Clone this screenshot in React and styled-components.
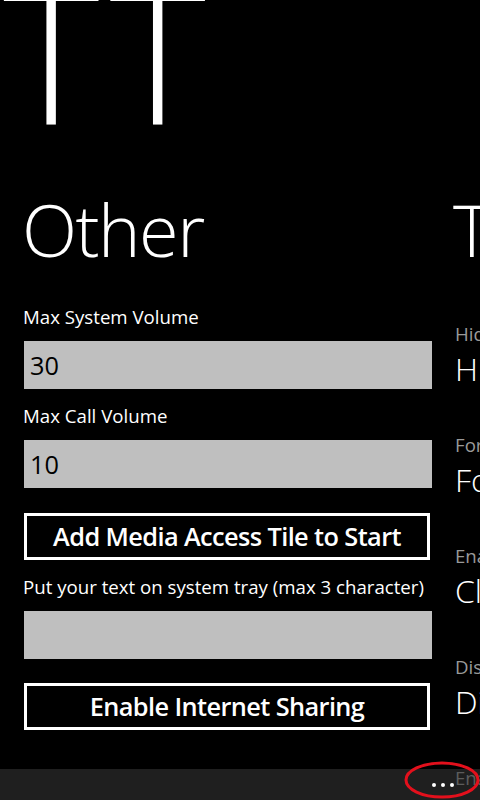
import React from 'react';
import styled, { createGlobalStyle } from 'styled-components';

const GlobalStyle = createGlobalStyle`
html, body {
  margin: 0;
  padding: 0;
  background: #000;
}
body {
  font-family: "Open Sans", "Noto Sans", sans-serif;
  color: #fff;
}
`

const Screen = styled.div`
position: relative;
width: 480px;
height: 800px;
overflow: hidden;
background: #000;
`
const PanoramaTitle = styled.div`
font-size: 184px;
font-weight: 300;
line-height: 184px;
height: 184px;
margin-top: -38px;
padding-left: 3px;
white-space: nowrap;
letter-spacing: 10px;
`
const Sections = styled.div`
display: flex;
gap: 23px;
margin-top: 43px;
padding-left: 24px;
`
const Section = styled.div`
flex: 0 0 ${p => p.$width || 'auto'};
display: flex;
flex-direction: column;
`
const SectionHeader = styled.h1`
margin: 0;
font-size: 72px;
font-weight: 300;
line-height: 80px;
height: 80px;
white-space: nowrap;
margin-left: -2px;
letter-spacing: -1.5px;
`
const FieldLabel = styled.div`
font-size: 18.67px;
line-height: 24px;
margin-top: ${p => p.$top || '0px'};
margin-bottom: 12px;
margin-left: -1px;
white-space: nowrap;
`
const TextBox = styled.div`
height: 48px;
box-sizing: border-box;
background: #bfbfbf;
color: #000;
font-size: 25.33px;
line-height: 48px;
padding-left: 6px;
`
const Button = styled.button`
display: block;
box-sizing: border-box;
width: 406px;
height: 47px;
margin-top: ${p => p.$top || '24px'};
background: transparent;
border: 3px solid #fff;
color: #fff;
font-family: inherit;
font-size: 25.33px;
font-weight: 600;
letter-spacing: -0.6px;
padding: 0;
cursor: pointer;
`
const Item = styled.div`
display: flex;
flex-direction: column;
margin-top: ${p => p.$top || '44px'};
white-space: nowrap;
`
const ItemLabel = styled.div`
font-size: 18.67px;
line-height: 24px;
color: #999;
`
const ItemValue = styled.div`
font-size: 32px;
font-weight: 300;
line-height: 40px;
margin-top: 3px;
`
const AppBar = styled.div`
position: absolute;
left: 0;
right: 0;
bottom: 0;
height: 31px;
background: rgba(52, 52, 52, 0.6);
display: flex;
justify-content: flex-end;
align-items: center;
padding-right: 26px;
`
const Dots = styled.div`
display: flex;
gap: 5px;
`
const Dot = styled.span`
width: 4px;
height: 4px;
border-radius: 50%;
background: #fff;
`
const Highlight = styled.svg`
position: absolute;
right: 0;
bottom: 0;
`

const settings = [
  { label: 'Hide system tray', value: 'Hidden' },
  { label: 'Force orientation', value: 'Follow sensor' },
  { label: 'Enable clock', value: 'Clock on' },
  { label: 'Disable lock screen', value: 'Disabled' },
  { label: 'Enable keyboard', value: 'Enabled' },
];

export default function App() {
  return (
    <>
      <GlobalStyle />
      <Screen>
        <PanoramaTitle>TT</PanoramaTitle>
        <Sections>
          <Section $width="408px">
            <SectionHeader>Other</SectionHeader>
            <FieldLabel $top="36px">Max System Volume</FieldLabel>
            <TextBox>30</TextBox>
            <FieldLabel $top="14.5px">Max Call Volume</FieldLabel>
            <TextBox>10</TextBox>
            <Button $top="25px">Add Media Access Tile to Start</Button>
            <FieldLabel $top="15px">Put your text on system tray (max 3 character)</FieldLabel>
            <TextBox />
            <Button $top="24px">Enable Internet Sharing</Button>
          </Section>
          <Section>
            <SectionHeader>Tweaks</SectionHeader>
            {settings.map((s, i) => (
              <Item key={s.label} $top={i === 0 ? '53px' : '44px'}>
                <ItemLabel>{s.label}</ItemLabel>
                <ItemValue>{s.value}</ItemValue>
              </Item>
            ))}
          </Section>
        </Sections>
        <AppBar>
          <Dots>
            <Dot />
            <Dot />
            <Dot />
          </Dots>
        </AppBar>
        <Highlight width="80" height="40" viewBox="0 0 80 40">
          <ellipse cx="42" cy="20" rx="36" ry="17" fill="none" stroke="#e3101c" strokeWidth="3" />
        </Highlight>
      </Screen>
    </>
  );
}
